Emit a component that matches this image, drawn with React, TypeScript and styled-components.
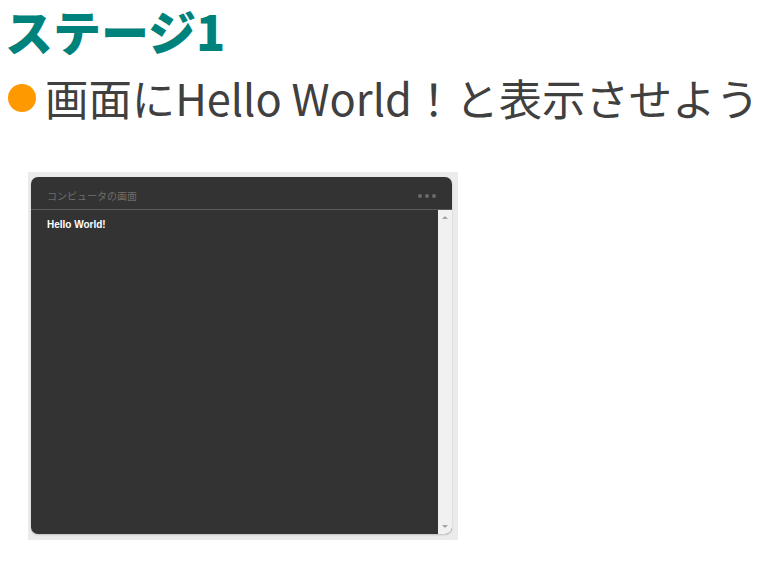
import React from "react";
import styled, { createGlobalStyle } from "styled-components";

const Global = createGlobalStyle`
  html, body { margin: 0; padding: 0; background: #ffffff; }
  body { font-family: "Noto Sans CJK JP", "Noto Sans", sans-serif; }
`;

const Page = styled.div`
  width: 774px;
  height: 562px;
  display: flex;
  flex-direction: column;
  overflow: hidden;
`;

const Title = styled.h1`
  margin: 0;
  padding: 0 0 0 5px;
  height: 60px;
  font-family: "Noto Sans CJK JP", sans-serif;
  font-weight: 900;
  font-size: 48px;
  line-height: 60px;
  color: #00827c;
  white-space: nowrap;
`;

const Bullet = styled.div`
  display: flex;
  align-items: center;
  gap: 9px;
  padding-left: 8px;
  height: 80px;
  margin-top: -2px;
`;

const Dot = styled.span`
  width: 28px;
  height: 28px;
  border-radius: 50%;
  background: #ff9900;
  flex: none;
`;

const BulletText = styled.span`
  font-family: "Noto Sans CJK JP", sans-serif;
  font-size: 43.4px;
  color: #404040;
  line-height: 1;
  white-space: nowrap;
`;

const Frame = styled.div`
  margin: 34px 0 0 28px;
  width: 421px;
  height: 357px;
  padding: 5px 6px 6px 3px;
  background: #ebebee;
  display: flex;
`;

const Window = styled.div`
  flex: 1;
  display: flex;
  flex-direction: column;
  border-radius: 7px;
  overflow: hidden;
  background: #333333;
  box-shadow: 0 1px 2px rgba(0, 0, 0, 0.18);
`;

const Header = styled.div`
  height: 33px;
  border-bottom: 1px solid #5a5a5a;
  display: flex;
  align-items: center;
  justify-content: space-between;
  padding: 4px 16px 0 16px;
  box-sizing: border-box;
`;

const HeaderLabel = styled.span`
  font-family: "Noto Sans CJK JP", sans-serif;
  font-size: 10px;
  color: #6e6e6e;
`;

const Dots = styled.div`
  display: flex;
  gap: 3px;
  margin-top: 2px;
`;

const SmallDot = styled.span`
  width: 4px;
  height: 4px;
  border-radius: 50%;
  background: #6a6a6a;
`;

const Body = styled.div`
  flex: 1;
  display: flex;
`;

const Content = styled.div`
  flex: 1;
  padding: 9px 16px;
  font-family: "Liberation Sans", Arial, sans-serif;
  font-weight: bold;
  font-size: 10px;
  color: #ffffff;
`;

const ScrollBar = styled.div`
  width: 14px;
  background: #f1f1f1;
  display: flex;
  flex-direction: column;
  justify-content: space-between;
  align-items: center;
  padding: 6px 0 6px;
`;

const Arrow = styled.span<{ $down?: boolean }>`
  width: 0;
  height: 0;
  border-left: 3px solid transparent;
  border-right: 3px solid transparent;
  ${(p) =>
    p.$down
      ? "border-top: 3px solid #a3a3a3;"
      : "border-bottom: 3px solid #a3a3a3;"}
`;

export default function App() {
  return (
    <Page>
      <Global />
      <Title>ステージ1</Title>
      <Bullet>
        <Dot />
        <BulletText>画面にHello World！と表示させよう</BulletText>
      </Bullet>
      <Frame>
        <Window>
          <Header>
            <HeaderLabel>コンピュータの画面</HeaderLabel>
            <Dots>
              <SmallDot />
              <SmallDot />
              <SmallDot />
            </Dots>
          </Header>
          <Body>
            <Content>Hello World!</Content>
            <ScrollBar>
              <Arrow />
              <Arrow $down />
            </ScrollBar>
          </Body>
        </Window>
      </Frame>
    </Page>
  );
}
